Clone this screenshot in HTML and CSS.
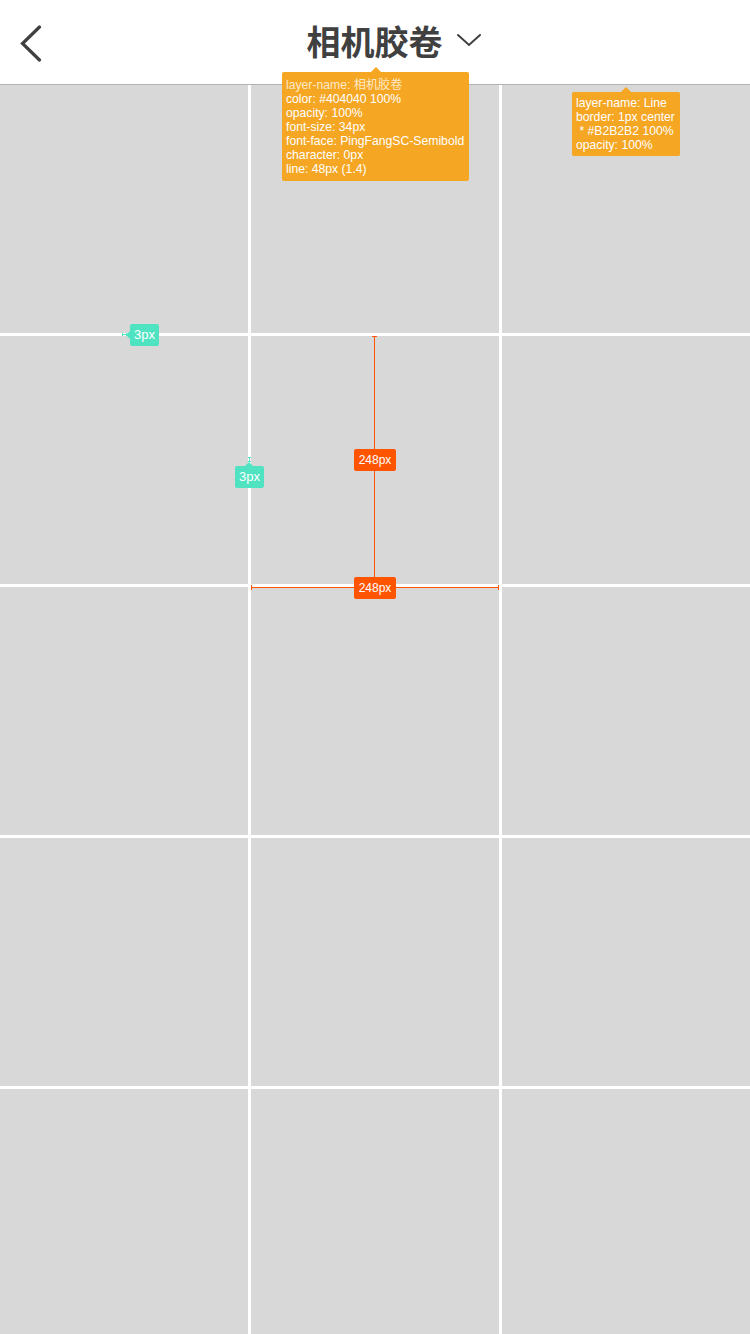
FILE: index.html
```html
<!DOCTYPE html>
<html lang="zh-CN">
  <head>
    <meta charset="UTF-8" />
    <meta name="viewport" content="width=750" />
    <title>相机胶卷</title>
    <link rel="stylesheet" href="styles.css">
  </head>

  <body>
    <div id="page">
      <div class="header">
        <div class="back">
          <svg width="24" height="40" viewBox="0 0 24 40">
            <polyline points="19.5,5 2.5,21.5 19.5,38" fill="none" stroke="#404040" stroke-width="3.2" stroke-linecap="round" stroke-linejoin="miter" />
          </svg>
        </div>
        <div class="title">
          相机胶卷
          <svg class="arrow" width="26" height="14" viewBox="0 0 26 14">
            <polyline points="2,2 13,12 24,2" fill="none" stroke="#404040" stroke-width="2" stroke-linecap="round" />
          </svg>
        </div>
      </div>

      <div class="photos">
        <div class="cell"></div><div class="cell"></div><div class="cell"></div>
        <div class="cell"></div><div class="cell"></div><div class="cell"></div>
        <div class="cell"></div><div class="cell"></div><div class="cell"></div>
        <div class="cell"></div><div class="cell"></div><div class="cell"></div>
        <div class="cell"></div><div class="cell"></div><div class="cell"></div>
      </div>

      <!-- 标注层 -->
      <div class="tip tip-title">
        <span class="pale">layer-name: 相机胶卷</span><br />
        color: #404040 100%<br />
        opacity: 100%<br />
        font-size: 34px<br />
        font-face: PingFangSC-Semibold<br />
        character: 0px<br />
        line: 48px (1.4)
      </div>

      <div class="tip tip-line">
        layer-name: Line<br />
        border: 1px center<br />
        &nbsp;* #B2B2B2 100%<br />
        opacity: 100%
      </div>

      <div class="mark mark-h"></div>
      <div class="gap gap-left">3px</div>

      <div class="mark mark-v"></div>
      <div class="gap gap-up">3px</div>

      <div class="measure measure-v"></div>
      <div class="size size-v">248px</div>

      <div class="measure measure-h"></div>
      <div class="size size-h">248px</div>
    </div>
  </body>
</html>
```

FILE: styles.css
```css
* {
  margin: 0;
  padding: 0;
  box-sizing: border-box;
}

body {
  background: #fff;
  font-family: "Liberation Sans", "Noto Sans CJK SC", sans-serif;
}

#page {
  position: relative;
  width: 750px;
  height: 1334px;
  overflow: hidden;
}

.header {
  position: relative;
  height: 85px;
  border-bottom: 1px solid #b2b2b2;
  display: flex;
  align-items: center;
  justify-content: center;
}

.header .back {
  position: absolute;
  left: 20px;
  top: 22px;
  width: 24px;
  height: 40px;
}

.header .back svg {
  display: block;
}

.header .title {
  position: relative;
  font-family: "Noto Sans CJK SC", sans-serif;
  font-weight: 700;
  font-size: 34px;
  line-height: 48px;
  color: #404040;
  margin-left: -1px;
  margin-bottom: 2px;
}

.header .title .arrow {
  position: absolute;
  left: 149px;
  top: 16px;
}

.photos {
  display: grid;
  grid-template-columns: 248px 248px 248px;
  grid-auto-rows: 248px;
  gap: 3px;
  background: #fff;
}

.photos .cell {
  background: #d8d8d8;
}

/* tooltips */
.tip {
  position: absolute;
  background: #f5a623;
  color: #fff;
  font-size: 12.2px;
  line-height: 14px;
  border-radius: 2px;
  white-space: nowrap;
}

.tip::before {
  content: "";
  position: absolute;
  top: -5px;
  left: 50%;
  margin-left: -5px;
  border-left: 5px solid transparent;
  border-right: 5px solid transparent;
  border-bottom: 5px solid #f5a623;
}

.tip .pale {
  color: #fde9c6;
}

.tip-title {
  left: 282px;
  top: 72px;
  width: 187px;
  height: 109px;
  padding: 6px 4px 0;
}

.tip-line {
  left: 572px;
  top: 92px;
  width: 108px;
  height: 64px;
  padding: 4px 4px 0;
}

/* spacing badges */
.gap {
  position: absolute;
  width: 29px;
  height: 22px;
  background: #50e3c2;
  color: #fff;
  font-size: 13px;
  line-height: 22px;
  text-align: center;
  border-radius: 2px;
}

.gap-left {
  left: 130px;
  top: 324px;
}

.gap-left::before {
  content: "";
  position: absolute;
  left: -4px;
  top: 7px;
  border-top: 4px solid transparent;
  border-bottom: 4px solid transparent;
  border-right: 4px solid #50e3c2;
}

.gap-up {
  left: 235px;
  top: 466px;
}

.gap-up::before {
  content: "";
  position: absolute;
  top: -4px;
  left: 10px;
  border-left: 4px solid transparent;
  border-right: 4px solid transparent;
  border-bottom: 4px solid #50e3c2;
}

.mark {
  position: absolute;
  border: 1px solid #50e3c2;
}

.mark-h {
  left: 122px;
  top: 333px;
  width: 5px;
  height: 3px;
  border-top: none;
  border-bottom: none;
  background: linear-gradient(#50e3c2, #50e3c2) center / 100% 1px no-repeat;
}

.mark-v {
  left: 248px;
  top: 457px;
  width: 3px;
  height: 5px;
  border-left: none;
  border-right: none;
  background: linear-gradient(#50e3c2, #50e3c2) center / 1px 100% no-repeat;
}

/* size measures */
.measure {
  position: absolute;
  background: #ff5500;
}

.measure-v {
  left: 374px;
  top: 336px;
  width: 1px;
  height: 248px;
}

.measure-v::before,
.measure-v::after {
  content: "";
  position: absolute;
  left: -2px;
  width: 5px;
  height: 1px;
  background: #ff5500;
}

.measure-v::before {
  top: 0;
}

.measure-v::after {
  bottom: 0;
}

.measure-h {
  left: 251px;
  top: 587px;
  width: 248px;
  height: 1px;
}

.measure-h::before,
.measure-h::after {
  content: "";
  position: absolute;
  top: -2px;
  width: 1px;
  height: 5px;
  background: #ff5500;
}

.measure-h::before {
  left: 0;
}

.measure-h::after {
  right: 0;
}

.size {
  position: absolute;
  left: 354px;
  width: 42px;
  height: 22px;
  background: #ff5500;
  color: #fff;
  font-size: 12px;
  line-height: 22px;
  text-align: center;
  border-radius: 2px;
}

.size-v {
  top: 449px;
}

.size-h {
  top: 577px;
}
```
